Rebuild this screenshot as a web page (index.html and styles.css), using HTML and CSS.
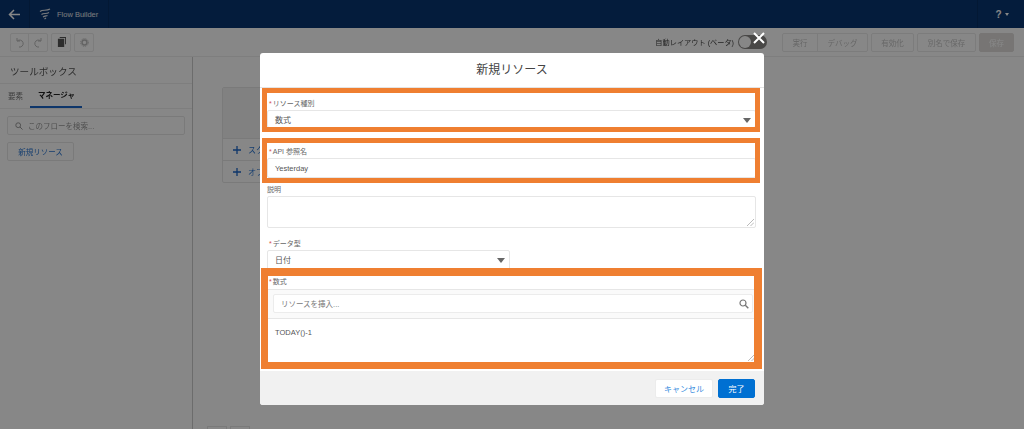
FILE: index.html
```html
<!DOCTYPE html>
<html lang="ja">
<head>
<meta charset="utf-8">
<title>Flow Builder</title>
<link rel="stylesheet" href="styles.css">
</head>
<body>
<div class="app">
  <header class="topbar">
    <div class="back"><svg width="13" height="11" viewBox="0 0 13 11"><path d="M6 1 1.500 5.500 6 10M2 5.500h10" fill="none" stroke="#fff" stroke-width="1.500"/></svg></div>
    <div class="brand">
      <svg width="12" height="12" viewBox="0 0 12 12"><path d="M1 3.500C4 1 7 3.500 11 1M2.500 6.500C5 4.500 7 6.500 10 4.500M4 9c1.500-1 3-1 4.500-1.500M5.500 11 7 10" fill="none" stroke="#e4e7ec" stroke-width="1.200"/></svg>
      <span>Flow Builder</span>
    </div>
    <div class="help"><span class="q">?</span><span class="caret"></span></div>
  </header>
  <div class="toolbar">
    <div class="group"><div class="tool split"><svg width="10" height="11" viewBox="0 0 10 11"><path d="M2 1v3h3M2.300 4A3.500 3.500 0 1 1 4 10" fill="none" stroke="#bbb" stroke-width="1"/></svg></div><div class="tool"><svg width="10" height="11" viewBox="0 0 10 11"><path d="M8 1v3H5M7.700 4A3.500 3.500 0 1 0 6 10" fill="none" stroke="#bbb" stroke-width="1"/></svg></div></div>
    <div class="group"><div class="tool"><svg width="9" height="10" viewBox="0 0 10 11"><path d="M3 0h7v8H9V1H3zM1 2h7v9H1z" fill="#555"/></svg></div></div>
    <div class="group"><div class="tool"><svg width="9" height="9" viewBox="0 0 10 10"><circle cx="5" cy="5" r="2.700" fill="none" stroke="#bbb" stroke-width="1.600"/><circle cx="5" cy="5" r="4.300" fill="none" stroke="#bbb" stroke-width="1" stroke-dasharray="1.300 1"/></svg></div></div>
    <div class="auto">
      <span class="auto-label">自動レイアウト (ベータ)</span>
      <span class="toggle"><span class="knob"></span></span>
    </div>
    <div class="group runs"><div class="act w35 split">実行</div><div class="act w50">デバッグ</div></div>
    <div class="group"><div class="act w42">有効化</div></div>
    <div class="group"><div class="act w59">別名で保存</div></div>
    <div class="group save">保存</div>
  </div>
  <div class="main">
    <aside class="side">
      <h2 class="side-title">ツールボックス</h2>
      <div class="tabs"><span class="tab">要素</span><span class="tab active">マネージャ</span></div>
      <div class="side-search"><svg width="8" height="8" viewBox="0 0 8 8"><circle cx="3.200" cy="3.200" r="2.400" fill="none" stroke="#999"/><path d="m5 5 2.500 2.500" stroke="#999"/></svg><span>このフローを検索...</span></div>
      <div class="new-res">新規リソース</div>
    </aside>
    <section class="canvas">
      <div class="card">
        <div class="card-head"></div>
        <div class="card-row"><svg width="8" height="8" viewBox="0 0 8 8"><path d="M4 0v8M0 4h8" stroke="#1b66c9" stroke-width="1.300"/></svg><span>スク</span></div>
        <div class="card-row"><svg width="8" height="8" viewBox="0 0 8 8"><path d="M4 0v8M0 4h8" stroke="#1b66c9" stroke-width="1.300"/></svg><span>オブ</span></div>
      </div>
      <div class="zoomctl"><span></span><span></span></div>
    </section>
  </div>
</div>

<div class="overlay">
  <div class="modal">
    <svg class="close" width="16" height="16" viewBox="0 0 16 16"><path d="m3 3 10 10M13 3 3 13" stroke="#fff" stroke-width="2"/></svg>
    <h1 class="modal-title">新規リソース</h1>
    <div class="modal-body">
      <div class="field f1">
        <label class="lbl"><i>*</i>リソース種別</label>
        <div class="ctl sel h17"><span>数式</span><em class="tri"></em></div>
      </div>
      <div class="field f2">
        <label class="lbl"><i>*</i>API 参照名</label>
        <div class="ctl h19"><span>Yesterday</span></div>
      </div>
      <div class="field f3">
        <label class="lbl">説明</label>
        <div class="ctl area"><svg class="grip" width="7" height="7" viewBox="0 0 7 7"><path d="M7 0 0 7M7 3.500 3.500 7" stroke="#aaa" stroke-width=".8"/></svg></div>
      </div>
      <div class="field f4">
        <label class="lbl"><i>*</i>データ型</label>
        <div class="ctl sel half"><span>日付</span><em class="tri"></em></div>
      </div>
      <div class="field f5">
        <label class="lbl"><i>*</i>数式</label>
        <div class="formula">
          <div class="fsearch"><div class="fbox"><span>リソースを挿入...</span><svg width="10" height="10" viewBox="0 0 10 10"><circle cx="4" cy="4" r="3" fill="none" stroke="#777" stroke-width="1.200"/><path d="m6.300 6.300 3 3" stroke="#777" stroke-width="1.400"/></svg></div></div>
          <div class="ftext"><span>TODAY()-1</span><svg class="grip" width="7" height="7" viewBox="0 0 7 7"><path d="M7 0 0 7M7 3.500 3.500 7" stroke="#aaa" stroke-width=".8"/></svg></div>
        </div>
      </div>
    </div>
    <footer class="modal-foot">
      <button class="btn cancel">キャンセル</button>
      <button class="btn done">完了</button>
    </footer>
    <div class="mark m1"></div>
    <div class="mark m2"></div>
    <div class="mark m3"></div>
  </div>
</div>
</body>
</html>
```
FILE: styles.css
```css
* { box-sizing: border-box; }
html, body { margin: 0; height: 100%; overflow: hidden; }
body {
  position: relative;
  width: 1024px;
  height: 429px;
  background: #fff;
  font-family: "Liberation Sans", "Noto Sans CJK JP", sans-serif;
  color: #3e3e3c;
  filter: blur(0.6px);
}
.app { display: flex; flex-direction: column; height: 429px; }

.topbar { height: 28px; flex: none; background: #083672; display: flex; align-items: center; color: #fff; }
.back { width: 30px; height: 28px; display: flex; align-items: center; justify-content: center; border-right: 1px solid #062e62; }
.brand { width: 79px; height: 28px; padding-left: 9px; display: flex; align-items: center; gap: 6px; border-right: 1px solid #062e62; font-size: 7.500px; color: #e4e7ec; }
.help { margin-left: auto; width: 47px; height: 28px; border-left: 1px solid #062e62; display: flex; align-items: center; justify-content: center; gap: 3px; padding-left: 2px; }
.q { font-size: 10px; font-weight: bold; }
.caret { border: 2px solid transparent; border-top: 3px solid #fff; border-bottom: 0; }

.toolbar { height: 29px; flex: none; background: #fff; border-bottom: 1px solid #eee; display: flex; align-items: center; padding: 0 10px; gap: 3px; }
.group { display: flex; height: 19px; border: 1px solid #eaeaea; border-radius: 2px; }
.tool { width: 18px; display: flex; align-items: center; justify-content: center; }
.split { border-right: 1px solid #eaeaea; }
.auto { margin-left: auto; margin-right: 12px; display: flex; align-items: center; gap: 4px; }
.auto-label { font-size: 7.200px; color: #444; white-space: nowrap; }
.toggle { width: 29px; height: 14px; border-radius: 7px; background: #8a8886; display: flex; align-items: center; padding-left: 1px; }
.knob { width: 12px; height: 12px; border-radius: 50%; background: #fff; }
.act { font-size: 7.500px; color: #c4c4c4; display: flex; align-items: center; justify-content: center; }
.w35 { width: 35px; }
.w50 { width: 49px; }
.w42 { width: 41px; }
.w59 { width: 57px; }
.group.save { width: 35px; align-items: center; justify-content: center; font-size: 7.500px; background: #e0dedc; border-color: #e0dedc; color: #fff; }

.main { flex: 1; display: flex; min-height: 0; }
.side { width: 193px; flex: none; border-right: 1px solid #ccc; }
.side-title { margin: 0; height: 27px; padding: 7px 0 0 10px; font-size: 9.600px; font-weight: normal; color: #555; border-bottom: 1px solid #eee; }
.tabs { display: flex; height: 25px; border-bottom: 1px solid #eee; padding-left: 8px; font-size: 7.500px; }
.tab { display: flex; align-items: center; height: 24px; color: #777; padding-bottom: 2px; }
.tab.active { margin-left: 7px; padding: 0 7px 2px 8px; font-weight: bold; color: #222; border-bottom: 2px solid #1b66c9; }
.side-search { margin: 7px 7px 0; height: 19px; border: 1px solid #e6e6e6; border-radius: 2px; display: flex; align-items: center; gap: 5px; padding-left: 7px; font-size: 7.500px; color: #999; }
.new-res { margin: 7px 0 0 7px; width: 67px; height: 19px; border: 1px solid #e6e6e6; border-radius: 2px; display: flex; align-items: center; justify-content: center; font-size: 7.500px; color: #2a76d2; }

.canvas { flex: 1; position: relative; padding: 30px 0 0 29px; display: flex; flex-direction: column; }
.card { width: 200px; height: 96px; border: 1px solid #e6e6e6; border-radius: 2px; }
.card-head { height: 50px; background: #f3f3f3; }
.card-row { height: 22px; border-top: 1px solid #e6e6e6; display: flex; align-items: center; gap: 7px; padding-left: 10px; font-size: 8px; color: #2a76d2; }
.zoomctl { display: flex; margin: 243px 0 0 -15px; }
.zoomctl span { width: 20px; height: 10px; border: 1px solid #e6e6e6; margin-right: 3px; }

.overlay { position: absolute; inset: 0; background: rgba(0, 0, 0, 0.47); display: flex; justify-content: center; align-items: flex-start; padding-top: 53px; }
.modal { position: relative; width: 504px; height: 352px; background: #fff; border-radius: 3px; display: flex; flex-direction: column; }
.close { position: absolute; top: -23px; right: -3px; }
.modal-title { margin: 0; height: 35px; flex: none; border-bottom: 1px solid #e4e4e4; font-size: 12px; font-weight: normal; text-align: center; line-height: 35px; color: #444; }
.modal-body { flex: 1; padding: 0 8px 0 7px; min-height: 0; }
.field { display: flex; flex-direction: column; }
.f1 { padding-top: 9px; }
.f2 { padding-top: 17px; }
.f3 { padding-top: 5px; }
.f4 { padding-top: 9px; }
.f5 { padding-top: 5px; }
.lbl { height: 13px; font-size: 7px; line-height: 13px; color: #666; white-space: nowrap; }
.lbl i { color: #d6504a; font-style: normal; margin: 0 1px 0 2px; }
.ctl { position: relative; border: 1px solid #e6e6e6; border-radius: 2px; background: #fff; display: flex; align-items: center; padding-left: 7px; font-size: 7.500px; color: #555; }
.sel { font-size: 8px; }
.h17 { height: 18px; }
.h19 { height: 20px; }
.area { height: 32px; }
.half { width: 243px; height: 20px; padding-bottom: 2px; }
.tri { position: absolute; right: 4px; top: 7px; border: 4px solid transparent; border-top: 5px solid #666; border-bottom: 0; }
.formula { border-top: 1px solid #e6e6e6; margin-top: 1px; height: 73px; display: flex; flex-direction: column; }
.fsearch { height: 29px; flex: none; padding: 4px 3px 0 6px; border-bottom: 1px solid #e6e6e6; background: #fafafa; }
.fbox { height: 19px; background: #fff; border: 1px solid #ececec; border-radius: 2px; display: flex; align-items: center; justify-content: space-between; padding: 0 3px 0 7px; font-size: 7.500px; color: #777; }
.ftext { flex: 1; position: relative; padding: 9px 0 0 8px; font-size: 7.500px; color: #555; }
.grip { position: absolute; right: 1px; bottom: 1px; }
.modal-foot { height: 34px; flex: none; background: #f1f1f1; border-radius: 0 0 3px 3px; display: flex; justify-content: flex-end; align-items: center; gap: 5px; padding-right: 9px; }
.btn { height: 19px; border-radius: 2px; font-family: inherit; font-size: 8px; padding: 0; }
.cancel { width: 58px; background: #fff; border: 1px solid #ececec; color: #3a8ee0; }
.done { width: 37px; background: #0070d2; border: 1px solid #0070d2; color: #fff; }

.mark { position: absolute; border-style: solid; border-color: #ef7f31; pointer-events: none; }
.m1 { left: 2px; top: 35px; width: 498px; height: 44px; border-width: 5px; }
.m2 { left: 2px; top: 85px; width: 498px; height: 45px; border-width: 5px; }
.m3 { left: 1px; top: 215px; width: 501px; height: 101px; border-width: 8px 8px 7px 7px; }
```
